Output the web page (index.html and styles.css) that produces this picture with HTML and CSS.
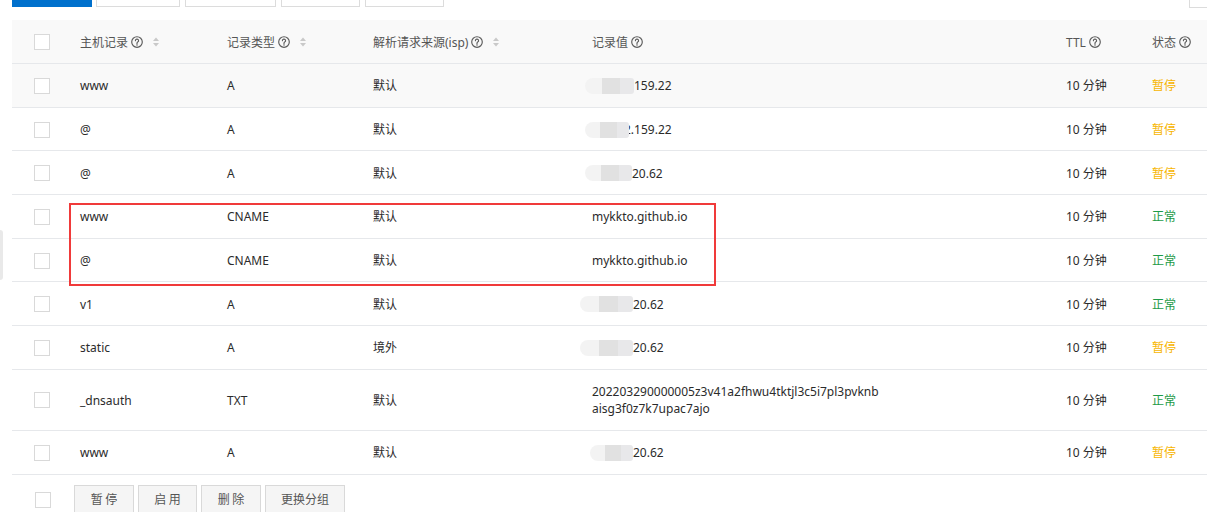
FILE: index.html
```html
<!DOCTYPE html>
<html lang="zh-CN">
<head>
<meta charset="utf-8">
<link rel="stylesheet" href="styles.css">
</head>
<body>
<div class="topbar">
  <div class="tab tab-active"></div>
  <div class="tab w84"></div>
  <div class="tab w91"></div>
  <div class="tab w79"></div>
  <div class="tab w79"></div>
  <div class="spacer"></div>
  <div class="tab-right"></div>
</div>
<div class="side-tab"></div>

<div class="table">
  <div class="row head">
    <div class="cell"><span class="cb"></span></div>
    <div class="cell"><span class="th">主机记录<svg class="qi" viewBox="0 0 12 12"><circle cx="6" cy="6" r="5.3"/><path d="M4.4 4.7a1.6 1.6 0 1 1 2.3 1.4c-.5.3-.7.6-.7 1.1v.5"/><circle class="dot" cx="6" cy="8.9" r=".75"/></svg><svg class="sort" viewBox="0 0 8 12"><path d="M4 1.5 7 5H1z"/><path d="M4 10.5 7 7H1z"/></svg></span></div>
    <div class="cell"><span class="th">记录类型<svg class="qi" viewBox="0 0 12 12"><circle cx="6" cy="6" r="5.3"/><path d="M4.4 4.7a1.6 1.6 0 1 1 2.3 1.4c-.5.3-.7.6-.7 1.1v.5"/><circle class="dot" cx="6" cy="8.9" r=".75"/></svg><svg class="sort" viewBox="0 0 8 12"><path d="M4 1.5 7 5H1z"/><path d="M4 10.5 7 7H1z"/></svg></span></div>
    <div class="cell"><span class="th">解析请求来源(isp)<svg class="qi" viewBox="0 0 12 12"><circle cx="6" cy="6" r="5.3"/><path d="M4.4 4.7a1.6 1.6 0 1 1 2.3 1.4c-.5.3-.7.6-.7 1.1v.5"/><circle class="dot" cx="6" cy="8.9" r=".75"/></svg><svg class="sort" viewBox="0 0 8 12"><path d="M4 1.5 7 5H1z"/><path d="M4 10.5 7 7H1z"/></svg></span></div>
    <div class="cell"><span class="th">记录值<svg class="qi" viewBox="0 0 12 12"><circle cx="6" cy="6" r="5.3"/><path d="M4.4 4.7a1.6 1.6 0 1 1 2.3 1.4c-.5.3-.7.6-.7 1.1v.5"/><circle class="dot" cx="6" cy="8.9" r=".75"/></svg></span></div>
    <div class="cell"><span class="th">TTL<svg class="qi" viewBox="0 0 12 12"><circle cx="6" cy="6" r="5.3"/><path d="M4.4 4.7a1.6 1.6 0 1 1 2.3 1.4c-.5.3-.7.6-.7 1.1v.5"/><circle class="dot" cx="6" cy="8.9" r=".75"/></svg></span></div>
    <div class="cell"><span class="th">状态<svg class="qi" viewBox="0 0 12 12"><circle cx="6" cy="6" r="5.3"/><path d="M4.4 4.7a1.6 1.6 0 1 1 2.3 1.4c-.5.3-.7.6-.7 1.1v.5"/><circle class="dot" cx="6" cy="8.9" r=".75"/></svg></span></div>
  </div>

  <div class="row hover">
    <div class="cell"><span class="cb"></span></div>
    <div class="cell">www</div>
    <div class="cell">A</div>
    <div class="cell">默认</div>
    <div class="cell"><span class="blur b48"></span>159.22</div>
    <div class="cell">10 分钟</div>
    <div class="cell pause">暂停</div>
  </div>
  <div class="row">
    <div class="cell"><span class="cb"></span></div>
    <div class="cell">@</div>
    <div class="cell">A</div>
    <div class="cell">默认</div>
    <div class="cell"><span class="blur b44 over"></span>2.159.22</div>
    <div class="cell">10 分钟</div>
    <div class="cell pause">暂停</div>
  </div>
  <div class="row">
    <div class="cell"><span class="cb"></span></div>
    <div class="cell">@</div>
    <div class="cell">A</div>
    <div class="cell">默认</div>
    <div class="cell"><span class="blur b46"></span>20.62</div>
    <div class="cell">10 分钟</div>
    <div class="cell pause">暂停</div>
  </div>
  <div class="row">
    <div class="cell"><span class="cb"></span></div>
    <div class="cell">www</div>
    <div class="cell">CNAME</div>
    <div class="cell">默认</div>
    <div class="cell">mykkto.github.io</div>
    <div class="cell">10 分钟</div>
    <div class="cell ok">正常</div>
  </div>
  <div class="row">
    <div class="cell"><span class="cb"></span></div>
    <div class="cell">@</div>
    <div class="cell">CNAME</div>
    <div class="cell">默认</div>
    <div class="cell">mykkto.github.io</div>
    <div class="cell">10 分钟</div>
    <div class="cell ok">正常</div>
  </div>
  <div class="row">
    <div class="cell"><span class="cb"></span></div>
    <div class="cell">v1</div>
    <div class="cell">A</div>
    <div class="cell">默认</div>
    <div class="cell"><span class="blur b53"></span>20.62</div>
    <div class="cell">10 分钟</div>
    <div class="cell ok">正常</div>
  </div>
  <div class="row">
    <div class="cell"><span class="cb"></span></div>
    <div class="cell">static</div>
    <div class="cell">A</div>
    <div class="cell">境外</div>
    <div class="cell"><span class="blur b53"></span>20.62</div>
    <div class="cell">10 分钟</div>
    <div class="cell pause">暂停</div>
  </div>
  <div class="row tall">
    <div class="cell"><span class="cb"></span></div>
    <div class="cell">_dnsauth</div>
    <div class="cell">TXT</div>
    <div class="cell">默认</div>
    <div class="cell txt">202203290000005z3v41a2fhwu4tktjl3c5i7pl3pvknb<br>aisg3f0z7k7upac7ajo</div>
    <div class="cell">10 分钟</div>
    <div class="cell ok">正常</div>
  </div>
  <div class="row">
    <div class="cell"><span class="cb"></span></div>
    <div class="cell">www</div>
    <div class="cell">A</div>
    <div class="cell">默认</div>
    <div class="cell"><span class="blur b41"></span>20.62</div>
    <div class="cell">10 分钟</div>
    <div class="cell pause">暂停</div>
  </div>

  <div class="highlight"></div>
</div>

<div class="actions">
  <span class="cb"></span>
  <button class="btn w60">暂 停</button>
  <button class="btn w59">启 用</button>
  <button class="btn w60">删 除</button>
  <button class="btn w80">更换分组</button>
</div>
</body>
</html>
```

FILE: styles.css
```css
* { box-sizing: border-box; }
html, body { margin: 0; padding: 0; background: #fff; }
body {
  width: 1207px;
  height: 512px;
  overflow: hidden;
  position: relative;
  font-family: "Noto Sans", "Noto Sans CJK SC", sans-serif;
  font-size: 12px;
  color: #2b2b2b;
}

.topbar {
  display: flex;
  height: 8px;
  padding-left: 12px;
  gap: 4px;
}
.tab {
  height: 7px;
  border: 1px solid #dcdcdc;
  border-top: none;
  background: #fff;
  margin-right: 1px;
}
.tab-active { width: 80px; background: #0070cc; border-color: #0070cc; margin-right: 0; }
.w84 { width: 84px; }
.w91 { width: 91px; }
.w79 { width: 79px; }
.spacer { flex: 1; }
.tab-right { width: 18px; height: 8px; border: 1px solid #dcdcdc; border-top: none; border-right: none; }

.side-tab {
  position: absolute;
  left: 0;
  top: 230px;
  width: 3px;
  height: 50px;
  background: #e9e9e9;
  border-radius: 0 3px 3px 0;
}

.table {
  position: relative;
  margin: 12px 0 0 12px;
}
.row {
  display: grid;
  grid-template-columns: 68px 147px 146px 219px 474px 86px 1fr;
  align-items: center;
  height: 43.7px;
  border-bottom: 1px solid #e6e8eb;
}
.row.head { height: 44px; background: #f9f9f9; color: #555; }
.row.hover { background: #f9f9f9; }
.row.tall { height: 61px; }
.cell {
  display: flex;
  align-items: center;
  white-space: nowrap;
  line-height: 17px;
  padding-top: 1px;
}
.cell.txt { display: block; line-height: 17px; }

.cb {
  display: inline-block;
  width: 16px;
  height: 16px;
  border: 1px solid #d9d9d9;
  background: #fff;
  margin-left: 22px;
}

.th { display: inline-flex; align-items: center; }
.qi {
  width: 12px;
  height: 12px;
  margin-left: 3px;
  fill: none;
  stroke: #5c5c5c;
  stroke-width: 1.15;
  stroke-linecap: round;
}
.qi .dot { fill: #5c5c5c; stroke: none; }
.sort {
  width: 8px;
  height: 12px;
  margin-left: 9px;
  fill: #c9c9c9;
}

.blur {
  display: inline-block;
  height: 16px;
  margin-left: -7px;
  border-radius: 8px 3px 3px 8px;
  background: linear-gradient(to right, #f3f3f3 0, #f3f3f3 35%, #e1e1e1 35%, #e1e1e1 72%, #e8e8ea 72%);
}
.b48 { width: 49px; }
.b44 { width: 44px; }
.b46 { width: 47px; }
.b53 { width: 53px; margin-left: -12px; }
.b41 { width: 43px; margin-left: -2px; }
.blur.over { position: relative; z-index: 1; margin-right: -5px; }

.pause { color: #f7b500; }
.ok { color: #1e9b47; }

.highlight {
  position: absolute;
  left: 57px;
  top: 183px;
  width: 647px;
  height: 83px;
  border: 2px solid #f03a3a;
  pointer-events: none;
}

.actions {
  display: flex;
  align-items: center;
  margin-top: 10px;
  padding-left: 35px;
  gap: 4px;
}
.actions .cb { margin-left: 0; margin-right: 19px; margin-top: 2px; }
.btn {
  height: 28px;
  border: 1px solid #d9d9d9;
  background: #f5f5f5;
  color: #555;
  font-family: "Noto Sans CJK SC", sans-serif;
  font-size: 12px;
  padding: 0;
}
.w60 { width: 60px; }
.w59 { width: 59px; }
.w80 { width: 80px; }
```
